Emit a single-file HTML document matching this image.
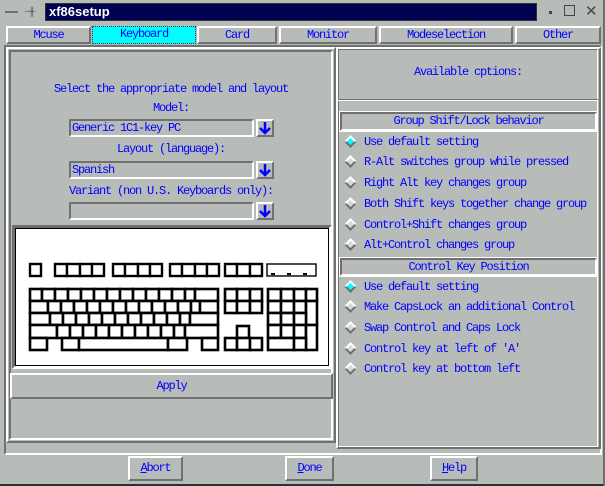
<!DOCTYPE html>
<html><head><style>
*{margin:0;padding:0;box-sizing:border-box}
body{width:605px;height:486px;background:#b8bcb8;position:relative;overflow:hidden;font-family:"Liberation Mono",monospace;font-size:12px;letter-spacing:-1.2px;color:#0000ff}
.a{position:absolute}
.r{position:absolute;border:2px solid;border-color:#fff #707070 #707070 #fff}
.s{position:absolute;border:2px solid;border-color:#707070 #fff #fff #707070}
.t{position:absolute;text-align:center;line-height:14px}
.d{position:absolute;width:9px;height:9px;background:#d8d8d8;transform:rotate(45deg);border:2px solid;border-color:#fff #707070 #707070 #fff}
.d.on{background:#00ffff}
.lbl{position:absolute;left:364px;line-height:12px}
.arr{position:absolute;width:18px;height:18px;border:2px solid;border-color:#fff #707070 #707070 #fff}
</style></head><body>
<div class="a" style="left:5px;top:11px;width:13px;height:2px;background:#707070"></div>
<div class="a" style="left:25px;top:8px;width:14px;height:8px;color:#505050;font-size:9px;line-height:8px">─╫</div>
<div class="a" style="left:45px;top:3px;width:492px;height:18px;background:#000050;border:1px solid #303030;color:#fff;font-family:'Liberation Sans',sans-serif;font-weight:bold;font-size:13px;letter-spacing:0;line-height:16px;padding-left:3px">xf86setup</div>
<div class="a" style="left:549px;top:11px;width:3px;height:3px;background:#444"></div>
<div class="a" style="left:564px;top:5px;width:11px;height:11px;border:1px solid #444"></div>
<div class="a" style="left:585px;top:2px;font-size:15px;color:#444;font-family:'Liberation Sans'">✕</div>
<div class="r t" style="left:6px;top:26px;width:85px;height:18px">Mcuse</div>
<div class="t" style="left:92px;top:26px;width:104px;height:18px;background:#00ffff;border:1px dotted #333">Keyboard</div>
<div class="r t" style="left:197px;top:26px;width:80px;height:18px">Card</div>
<div class="r t" style="left:279px;top:26px;width:98px;height:18px">Monitor</div>
<div class="r t" style="left:379px;top:26px;width:134px;height:18px">Modeselection</div>
<div class="r t" style="left:515px;top:26px;width:86px;height:18px">Other</div>
<div class="a" style="left:4px;top:45px;width:598px;height:410px;border:2px solid;border-color:#707070 #fff #fff #707070"></div>
<div class="r" style="left:6px;top:47px;width:330px;height:396px"></div>
<div class="r" style="left:9px;top:50px;width:324px;height:390px;border-color:#707070 #fff #fff #707070"></div>
<div class="t" style="left:9px;top:82px;width:324px">Select the appropriate model and layout</div>
<div class="t" style="left:9px;top:101px;width:324px">Model:</div>
<div class="s" style="left:69px;top:119px;width:185px;height:18px;padding-left:1px;line-height:14px">Generic 1C1-key PC</div>
<div class="t" style="left:9px;top:142px;width:324px">Layout (language):</div>
<div class="s" style="left:69px;top:161px;width:185px;height:18px;padding-left:1px;line-height:14px">Spanish</div>
<div class="t" style="left:9px;top:184px;width:324px">Variant (non U.S. Keyboards only):</div>
<div class="s" style="left:69px;top:202px;width:185px;height:18px"></div>
<div class="arr" style="left:256px;top:119px"><svg width="14" height="14"><path d="M7 1V11M2 7L7 12L12 7" stroke="#0000ff" stroke-width="2.5" fill="none"/></svg></div>
<div class="arr" style="left:256px;top:161px"><svg width="14" height="14"><path d="M7 1V11M2 7L7 12L12 7" stroke="#0000ff" stroke-width="2.5" fill="none"/></svg></div>
<div class="arr" style="left:256px;top:202px"><svg width="14" height="14"><path d="M7 1V11M2 7L7 12L12 7" stroke="#0000ff" stroke-width="2.5" fill="none"/></svg></div>
<div class="a" style="left:12px;top:225px;width:320px;height:144px;border:3px solid;border-color:#707070 #fff #fff #707070;background:#888"></div>
<div class="a" style="left:15px;top:228px;width:314px;height:138px;background:#fff;border:1px solid #000"></div>
<svg class="a" style="left:0;top:0" width="605" height="486">
<g fill="#fff" stroke="#000" stroke-width="2.4">
<rect x="30" y="264" width="11" height="12"/>
<rect x="55" y="264" width="12" height="12"/><rect x="67" y="264" width="13" height="12"/><rect x="80" y="264" width="12" height="12"/><rect x="92" y="264" width="12" height="12"/>
<rect x="113" y="264" width="12" height="12"/><rect x="125" y="264" width="13" height="12"/><rect x="138" y="264" width="12" height="12"/><rect x="150" y="264" width="12" height="12"/>
<rect x="170" y="264" width="12" height="12"/><rect x="182" y="264" width="13" height="12"/><rect x="195" y="264" width="12" height="12"/><rect x="207" y="264" width="12" height="12"/>
<rect x="225" y="264" width="12" height="12"/><rect x="237" y="264" width="13" height="12"/><rect x="250" y="264" width="12" height="12"/>
</g>
<rect x="267" y="264" width="49" height="12" fill="#fff" stroke="#000" stroke-width="1.4"/>
<g fill="#000"><rect x="271" y="273" width="4" height="2"/><rect x="287" y="273" width="4" height="2"/><rect x="303" y="273" width="4" height="2"/></g>
<g fill="#fff" stroke="#000" stroke-width="2.6">
<rect x="30" y="289" width="12" height="12"/><rect x="42" y="289" width="13" height="12"/><rect x="55" y="289" width="13" height="12"/><rect x="68" y="289" width="13" height="12"/><rect x="81" y="289" width="13" height="12"/><rect x="94" y="289" width="13" height="12"/><rect x="107" y="289" width="13" height="12"/><rect x="120" y="289" width="13" height="12"/><rect x="133" y="289" width="13" height="12"/><rect x="146" y="289" width="13" height="12"/><rect x="159" y="289" width="13" height="12"/><rect x="172" y="289" width="13" height="12"/><rect x="185" y="289" width="10" height="12"/><rect x="195" y="289" width="23" height="12"/>
<rect x="30" y="301" width="18" height="12"/><rect x="48" y="301" width="13" height="12"/><rect x="61" y="301" width="13" height="12"/><rect x="74" y="301" width="13" height="12"/><rect x="87" y="301" width="13" height="12"/><rect x="100" y="301" width="13" height="12"/><rect x="113" y="301" width="13" height="12"/><rect x="126" y="301" width="13" height="12"/><rect x="139" y="301" width="13" height="12"/><rect x="152" y="301" width="13" height="12"/><rect x="165" y="301" width="13" height="12"/><rect x="178" y="301" width="13" height="12"/><rect x="191" y="301" width="9" height="12"/><rect x="200" y="301" width="18" height="12"/>
<rect x="30" y="313" width="20" height="12"/><rect x="50" y="313" width="13" height="12"/><rect x="63" y="313" width="13" height="12"/><rect x="76" y="313" width="13" height="12"/><rect x="89" y="313" width="13" height="12"/><rect x="102" y="313" width="13" height="12"/><rect x="115" y="313" width="13" height="12"/><rect x="128" y="313" width="13" height="12"/><rect x="141" y="313" width="13" height="12"/><rect x="154" y="313" width="13" height="12"/><rect x="167" y="313" width="13" height="12"/><rect x="180" y="313" width="10" height="12"/><rect x="190" y="313" width="28" height="12"/>
<rect x="30" y="325" width="27" height="13"/><rect x="57" y="325" width="13" height="13"/><rect x="70" y="325" width="13" height="13"/><rect x="83" y="325" width="13" height="13"/><rect x="96" y="325" width="13" height="13"/><rect x="109" y="325" width="13" height="13"/><rect x="122" y="325" width="13" height="13"/><rect x="135" y="325" width="13" height="13"/><rect x="148" y="325" width="13" height="13"/><rect x="161" y="325" width="13" height="13"/><rect x="174" y="325" width="11" height="13"/><rect x="185" y="325" width="33" height="13"/>
<rect x="30" y="338" width="17" height="12"/><rect x="62" y="338" width="17" height="12"/><rect x="79" y="338" width="89" height="12"/><rect x="168" y="338" width="19" height="12"/><rect x="202" y="338" width="16" height="12"/>
<rect x="225" y="289" width="12" height="12"/><rect x="237" y="289" width="13" height="12"/><rect x="250" y="289" width="12" height="12"/>
<rect x="225" y="301" width="12" height="12"/><rect x="237" y="301" width="13" height="12"/><rect x="250" y="301" width="12" height="12"/>
<rect x="237" y="326" width="12" height="12"/>
<rect x="225" y="338" width="12" height="12"/><rect x="237" y="338" width="13" height="12"/><rect x="250" y="338" width="12" height="12"/>
<rect x="268" y="289" width="13" height="12"/><rect x="281" y="289" width="13" height="12"/><rect x="294" y="289" width="12" height="12"/><rect x="306" y="289" width="11" height="12"/>
<rect x="268" y="301" width="13" height="12"/><rect x="281" y="301" width="13" height="12"/><rect x="294" y="301" width="12" height="12"/><rect x="306" y="301" width="11" height="24"/>
<rect x="268" y="313" width="13" height="12"/><rect x="281" y="313" width="13" height="12"/><rect x="294" y="313" width="12" height="12"/>
<rect x="268" y="325" width="13" height="13"/><rect x="281" y="325" width="13" height="13"/><rect x="294" y="325" width="12" height="13"/><rect x="306" y="325" width="11" height="25"/>
<rect x="268" y="338" width="26" height="12"/><rect x="294" y="338" width="12" height="12"/>
</g>
</svg>
<div class="r t" style="left:10px;top:373px;width:323px;height:26px;line-height:22px">Apply</div>
<div class="r" style="left:336px;top:47px;width:265px;height:402px;border-color:#fff #707070 #707070 #fff"></div>
<div class="a" style="left:338px;top:49px;width:260px;height:398px;border:1px solid;border-color:#707070 #fff #fff #707070"></div>
<div class="t" style="left:338px;top:65px;width:260px">Available cptions:</div>
<div class="a" style="left:338px;top:99px;width:260px;height:2px;border-top:1px solid #707070;border-bottom:1px solid #fff"></div>
<div class="t" style="left:340px;top:112px;width:257px;height:19px;border:2px solid;border-color:#707070 #fff #fff #707070;outline:1px solid #fff;line-height:15px">Group Shift/Lock behavior</div>
<div class="d on" style="left:346px;top:137px"></div><div class="lbl" style="top:136px">Use default setting</div>
<div class="d" style="left:346px;top:157px"></div><div class="lbl" style="top:156px">R-Alt switches group while pressed</div>
<div class="d" style="left:346px;top:178px"></div><div class="lbl" style="top:177px">Right Alt key changes group</div>
<div class="d" style="left:346px;top:199px"></div><div class="lbl" style="top:198px">Both Shift keys together change group</div>
<div class="d" style="left:346px;top:220px"></div><div class="lbl" style="top:219px">Control+Shift changes group</div>
<div class="d" style="left:346px;top:240px"></div><div class="lbl" style="top:239px">Alt+Control changes group</div>
<div class="t" style="left:340px;top:258px;width:257px;height:18px;border:2px solid;border-color:#707070 #fff #fff #707070;outline:1px solid #fff;line-height:14px">Control Key Position</div>
<div class="d on" style="left:346px;top:282px"></div><div class="lbl" style="top:281px">Use default setting</div>
<div class="d" style="left:346px;top:302px"></div><div class="lbl" style="top:301px">Make CapsLock an additional Control</div>
<div class="d" style="left:346px;top:323px"></div><div class="lbl" style="top:322px">Swap Control and Caps Lock</div>
<div class="d" style="left:346px;top:344px"></div><div class="lbl" style="top:343px">Control key at left of 'A'</div>
<div class="d" style="left:346px;top:364px"></div><div class="lbl" style="top:363px">Control key at bottom left</div>
<div class="r t" style="left:128px;top:456px;width:55px;height:25px;line-height:21px"><u>A</u>bort</div>
<div class="r t" style="left:285px;top:456px;width:49px;height:25px;line-height:21px"><u>D</u>one</div>
<div class="r t" style="left:430px;top:456px;width:48px;height:25px;line-height:21px"><u>H</u>elp</div>
<div class="a" style="left:0;top:484px;width:605px;height:2px;background:#303030"></div>
<div class="a" style="left:603px;top:0;width:2px;height:486px;background:#707070"></div>
</body></html>
